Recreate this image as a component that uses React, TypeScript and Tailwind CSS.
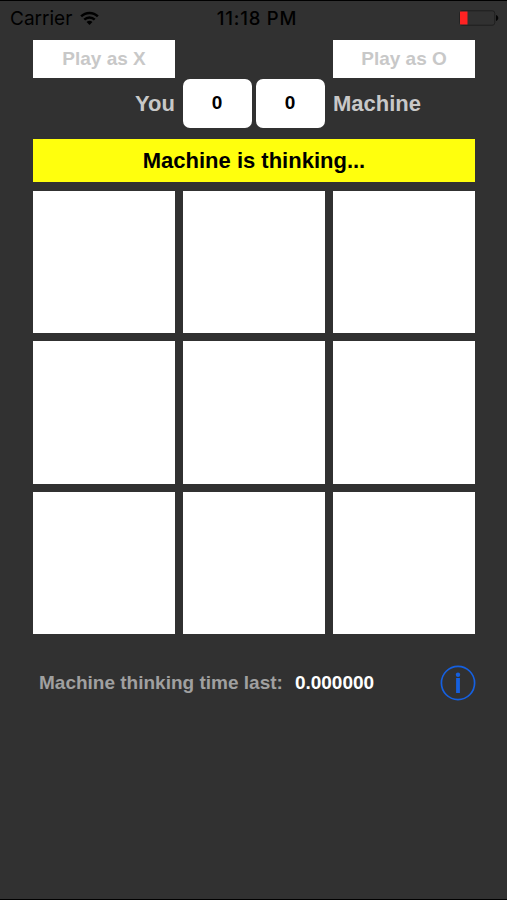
const cells = Array.from({ length: 9 }, (_, index) => index);

function StatusBar() {
  return (
    <header className="grid h-[39px] grid-cols-3 items-start pt-[5px] font-['Inter',sans-serif] text-[19px] leading-6 font-normal text-black">
      <div className="flex items-center pt-px pl-[10px]">
        <span className="w-[62px] whitespace-nowrap">Carrier</span>
        <svg
          className="ml-[8px] h-[15px] w-[19px] -translate-y-px"
          fill="none"
          stroke="currentColor"
          strokeWidth="2.6"
          viewBox="0 0 20 15"
        >
          <path d="M1.2 5.3a12.4 12.4 0 0 1 17.6 0" />
          <path d="M4.5 8.7a7.8 7.8 0 0 1 11 0" />
          <path d="M10 14.4 6.9 11.3a4.4 4.4 0 0 1 6.2 0Z" fill="currentColor" stroke="none" />
        </svg>
      </div>
      <span className="whitespace-nowrap pl-[7px] text-center text-[18.5px] font-medium tracking-[0.8px]">
        11:18 PM
      </span>
      <div className="flex justify-end pr-[8px] pt-[4px]">
        <svg className="h-[16px] w-[40px]" fill="none" viewBox="0 0 40 16">
          <rect
            height="14.5"
            rx="2.5"
            stroke="#1f1f1f"
            strokeWidth="1"
            width="35"
            x="0.75"
            y="0.75"
          />
          <rect fill="#ff2222" height="13" width="7.5" x="1" y="1.5" />
          <path d="M37 5c3 1 3 5 0 6Z" fill="#050505" />
        </svg>
      </div>
    </header>
  );
}

function PlayButton({ mark }: { mark: string }) {
  return (
    <button className="h-[38px] w-[142px] bg-white text-[19px] text-[#c8c8c8]" disabled type="button">
      Play as {mark}
    </button>
  );
}

function Score({ value }: { value: number }) {
  return (
    <div className="flex h-[49px] w-[69px] items-center justify-center rounded-[7px] bg-white pr-px text-[19px] text-black">
      {value}
    </div>
  );
}

export default function App() {
  return (
    <div className="h-[900px] w-[507px] overflow-hidden border-y border-black bg-[#313131] font-['Liberation_Sans',Arial,sans-serif] font-bold">
      <StatusBar />

      <main className="ml-[33px] w-[442px]">
        <div className="flex justify-between">
          <PlayButton mark="X" />
          <PlayButton mark="O" />
        </div>

        {/* Score */}
        <div className="mt-px flex items-center text-[22px] text-[#c8c8c8]">
          <span className="w-[142px] text-right">You</span>
          <div className="ml-[8px] flex gap-[4px]">
            <Score value={0} />
            <Score value={0} />
          </div>
          <span className="ml-[8px]">Machine</span>
        </div>

        <div className="mt-[11px] flex h-[43px] items-center justify-center bg-[#ffff0d] text-[22px] text-black">
          Machine is thinking...
        </div>

        {/* Board */}
        <div className="mt-[9px] grid h-[443px] grid-cols-3 grid-rows-3 gap-[8px]">
          {cells.map((cell) => (
            <button aria-label={`Cell ${cell + 1}`} className="bg-white" key={cell} type="button" />
          ))}
        </div>

        <div className="mt-[31px] -mr-px flex h-[36px] items-center text-[19px]">
          <span className="ml-[6px] whitespace-nowrap text-[#a0a0a0]">Machine thinking time last:</span>
          <span className="ml-[12px] text-white">0.000000</span>
          <svg
            className="ml-auto size-[36px]"
            fill="none"
            stroke="#1560e0"
            viewBox="0 0 36 36"
          >
            <circle cx="18" cy="18" r="16.6" strokeWidth="1.7" />
            <circle cx="18" cy="9.8" fill="#1560e0" r="2.2" stroke="none" />
            <path d="M18 13v15" strokeWidth="3.8" />
          </svg>
        </div>
      </main>
    </div>
  );
}
